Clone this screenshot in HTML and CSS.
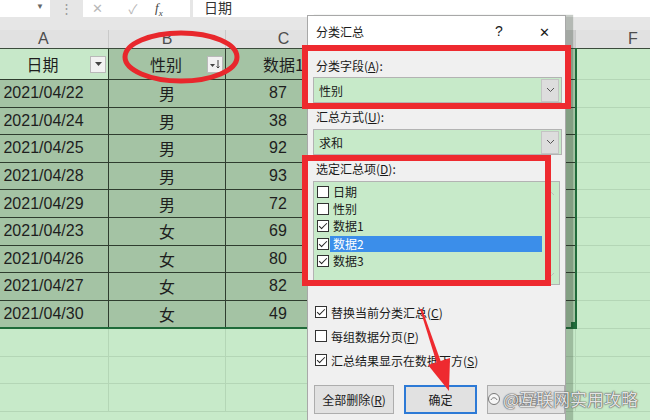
FILE: index.html
```html
<!DOCTYPE html>
<html>
<head>
  <meta charset="utf-8">
  <title>分类汇总</title>
  <link rel="stylesheet" href="styles.css">
</head>
<body>
  <div class="fbar">
    <div class="namebox"><span class="drop">▼</span></div>
    <div class="grip">⋮</div>
    <div class="fbtns">
      <span class="ico">✕</span>
      <span class="ico">✓</span>
      <span class="fx">f<sub>x</sub></span>
    </div>
    <div class="finput">日期</div>
  </div>

  <table class="sheet">
    <colgroup>
      <col class="ca"><col class="cb"><col class="cc"><col class="cd"><col class="ce"><col class="cf">
    </colgroup>
    <tr class="letters"><th>A</th><th>B</th><th>C</th><th>D</th><th class="sel">E</th><th>F</th></tr>
    <tr class="head">
      <td class="a1"><div class="hc"><span class="lbl">日期</span><i class="filter"><svg width="9" height="6" viewBox="0 0 9 6"><path d="M1 1h7L4.5 5z" fill="#444"/></svg></i></div></td>
      <td><div class="hc"><span class="lbl">性别</span><i class="filter"><svg width="12" height="12" viewBox="0 0 12 12"><path d="M1 6h5L3.5 9z" fill="#444"/><path d="M9 2v8M7.5 8.5L9 10l1.5-1.5" stroke="#444" fill="none"/></svg></i></div></td>
      <td>数据1</td><td>数据2</td><td class="edge">数据3</td><td class="free"></td>
    </tr>
    <tr class="row"><td>2021/04/22</td><td>男</td><td class="num">87</td><td></td><td class="edge"></td><td class="free"></td></tr>
    <tr class="row"><td>2021/04/24</td><td>男</td><td class="num">38</td><td></td><td class="edge"></td><td class="free"></td></tr>
    <tr class="row"><td>2021/04/25</td><td>男</td><td class="num">92</td><td></td><td class="edge"></td><td class="free"></td></tr>
    <tr class="row"><td>2021/04/28</td><td>男</td><td class="num">93</td><td></td><td class="edge"></td><td class="free"></td></tr>
    <tr class="row"><td>2021/04/29</td><td>男</td><td class="num">72</td><td></td><td class="edge"></td><td class="free"></td></tr>
    <tr class="row"><td>2021/04/23</td><td>女</td><td class="num">69</td><td></td><td class="edge"></td><td class="free"></td></tr>
    <tr class="row"><td>2021/04/26</td><td>女</td><td class="num">80</td><td></td><td class="edge"></td><td class="free"></td></tr>
    <tr class="row"><td>2021/04/27</td><td>女</td><td class="num">82</td><td></td><td class="edge"></td><td class="free"></td></tr>
    <tr class="row last"><td>2021/04/30</td><td>女</td><td class="num">49</td><td></td><td class="edge"></td><td class="free"></td></tr>
    <tr class="blank"><td></td><td></td><td></td><td></td><td></td><td></td></tr>
    <tr class="blank"><td></td><td></td><td></td><td></td><td></td><td></td></tr>
    <tr class="blank"><td></td><td></td><td></td><td></td><td></td><td></td></tr>
  </table>

  <div class="handle"></div>

  <div class="dialog">
    <div class="dtitle">
      <span>分类汇总</span>
      <span class="tbtn help">?</span>
      <span class="tbtn">✕</span>
    </div>
    <div class="dbody">
      <div class="dlabel">分类字段(<u>A</u>):</div>
      <div class="combo">
        <span>性别</span>
        <i class="cbtn"><svg width="9" height="6" viewBox="0 0 9 6"><path d="M1 1l3.5 3.5L8 1" stroke="#555" fill="none"/></svg></i>
      </div>
      <div class="dlabel">汇总方式(<u>U</u>):</div>
      <div class="combo">
        <span>求和</span>
        <i class="cbtn"><svg width="9" height="6" viewBox="0 0 9 6"><path d="M1 1l3.5 3.5L8 1" stroke="#555" fill="none"/></svg></i>
      </div>
      <div class="dlabel">选定汇总项(<u>D</u>):</div>
      <div class="list">
        <div class="items">
          <div class="item"><b class="chk"></b><span>日期</span></div>
          <div class="item"><b class="chk"></b><span>性别</span></div>
          <div class="item"><b class="chk on"></b><span>数据1</span></div>
          <div class="item sel"><b class="chk on"></b><span>数据2</span></div>
          <div class="item"><b class="chk on"></b><span>数据3</span></div>
        </div>
        <div class="sbar">
          <svg width="7" height="5" viewBox="0 0 7 5"><path d="M1 4l2.5-2.5L6 4" stroke="#bbb" fill="none"/></svg>
          <svg width="7" height="5" viewBox="0 0 7 5"><path d="M1 1l2.5 2.5L6 1" stroke="#bbb" fill="none"/></svg>
        </div>
      </div>
      <div class="opt first"><b class="chk on"></b>替换当前分类汇总(<u>C</u>)</div>
      <div class="opt"><b class="chk"></b>每组数据分页(<u>P</u>)</div>
      <div class="opt"><b class="chk on"></b>汇总结果显示在数据下方(<u>S</u>)</div>
      <div class="btns">
        <button class="b1">全部删除(<u>R</u>)</button>
        <button class="ok">确定</button>
        <button class="b3">取消</button>
      </div>
    </div>
    <div class="mark m1"></div>
    <div class="mark m2"></div>
  </div>

  <svg class="annot" width="650" height="420" viewBox="0 0 650 420">
    <ellipse cx="181" cy="57" rx="56" ry="24" fill="none" stroke="#e8272c" stroke-width="5"/>
    <polygon points="420,309 422,309 441,362 437,364" fill="#ee2a2f"/>
    <polygon points="449,391 428,365 450,358" fill="#ee2a2f"/>
  </svg>

  <div class="watermark">
    <svg width="14" height="14" viewBox="0 0 14 14"><circle cx="7" cy="7" r="5.5" fill="rgba(255,255,255,0.7)" stroke="#777" stroke-width="1"/><path d="M4 8c1-3 5-3 6 0" stroke="#777" fill="none"/></svg>
    <span>@互联网实用攻略</span>
  </div>
</body>
</html>
```

FILE: styles.css
```css
body {
  margin: 0;
  width: 650px;
  height: 420px;
  overflow: hidden;
  position: relative;
  background-color: #c7eac9;
  font-family: "Liberation Sans", "Noto Sans CJK SC", sans-serif;
  color: #1e1e1e;
}

/* formula bar */
.fbar {
  height: 30px;
  background-color: #e6e6e6;
  display: flex;
  align-items: flex-start;
}

.namebox {
  width: 50px;
  height: 17px;
  background-color: #ffffff;
  display: flex;
  justify-content: flex-end;
}

.namebox .drop {
  font-size: 8px;
  color: #666;
  padding: 2px 6px 0 0;
}

.grip {
  width: 33px;
  text-align: center;
  font-size: 13px;
  line-height: 17px;
  color: #9a9a9a;
}

.fbtns {
  width: 107px;
  height: 17px;
  background-color: #ffffff;
  display: flex;
  align-items: center;
}

.fbtns .ico {
  width: 36px;
  text-align: center;
  font-size: 13px;
  color: #b8b8b8;
}

.fbtns .ico:first-child {
  margin-left: -4px;
}

.fbtns .fx {
  margin-left: 4px;
  font-family: "Liberation Serif", serif;
  font-style: italic;
  font-size: 13px;
  color: #444;
}

.fbtns .fx sub {
  font-size: 9px;
}

.finput {
  flex: 1;
  margin-left: 3px;
  height: 17px;
  background-color: #ffffff;
  font-family: "Noto Sans CJK SC", sans-serif;
  font-size: 14px;
  line-height: 15px;
  padding-left: 11px;
  color: #333;
}

/* grid */
.sheet {
  border-collapse: collapse;
  table-layout: fixed;
  width: 712px;
  margin-left: -22px;
  font-size: 16px;
}

.ca { width: 130px; }
.cb { width: 117px; }
.cc { width: 116px; }
.cd { width: 117px; }
.ce { width: 117px; }
.cf { width: 115px; }

.letters th {
  height: 18px;
  padding: 0;
  font-weight: normal;
  font-size: 16px;
  line-height: 18px;
  color: #4d4d4d;
  background-color: #e1e1e1;
  border-right: 1px solid #c9c9c9;
  border-bottom: 1px solid #3c4c3c;
}

.letters th.sel {
  background-color: #cfcfcf;
}

td {
  padding: 0;
  text-align: center;
  white-space: nowrap;
  overflow: hidden;
}

.head td,
.row td {
  background-color: #a4c3a4;
  border: 1px solid #2f3d2f;
  font-family: "Noto Sans CJK SC", sans-serif;
}

.head td {
  height: 30px;
}

.row td {
  height: 26.6px;
  font-family: "Liberation Sans", "Noto Sans CJK SC", sans-serif;
}

.head td.a1 {
  background-color: #c7e8c9;
}

.row td.num {
  padding-right: 11px;
}

td.edge {
  border-right: 2px solid #1f6b3a !important;
}

.row.last td {
  border-bottom: 2px solid #1f6b3a;
}

.head td.free,
.row td.free,
.blank td {
  background-color: #c7eac9;
  border: 1px solid #b4d6b6;
}

.blank td {
  height: 26.5px;
}

.hc {
  display: flex;
  align-items: center;
  padding-left: 16px;
}

.hc .lbl {
  flex: 1;
  text-align: center;
}

.filter {
  width: 14px;
  height: 15px;
  margin-right: 2px;
  background-color: #f2f2f2;
  border: 1px solid #b9b9b9;
  display: flex;
  align-items: center;
  justify-content: center;
}

.handle {
  position: absolute;
  left: 571px;
  top: 322px;
  width: 5px;
  height: 5px;
  background-color: #1f6b3a;
}

/* dialog */
.dialog {
  position: absolute;
  left: 307px;
  top: 15px;
  width: 259px;
  height: 420px;
  background-color: #f0f0f0;
  border: 1px solid #a8a8a8;
  box-sizing: border-box;
  box-shadow: 7px 0 1px rgba(30, 50, 30, 0.25);
  font-family: "Noto Sans CJK SC", sans-serif;
  font-size: 12px;
  color: #1a1a1a;
}

.dtitle {
  height: 30px;
  background-color: #ffffff;
  display: flex;
  align-items: center;
  padding-left: 8px;
  padding-right: 6px;
}

.dtitle .tbtn {
  width: 30px;
  text-align: center;
  font-size: 13px;
}

.dtitle .help {
  margin-left: auto;
  margin-right: 15px;
  font-family: "Liberation Sans", sans-serif;
  font-size: 14px;
}

.dbody {
  padding: 12px 0 0 5px;
}

.dlabel {
  height: 16px;
  line-height: 16px;
  padding-left: 3px;
  margin-top: 6px;
}

.dlabel:first-child {
  margin-top: 0;
}

.combo {
  margin-top: 3px;
  width: 249px;
  height: 26px;
  box-sizing: border-box;
  background-color: #c7eac9;
  border: 1px solid #b3b3b3;
  display: flex;
  align-items: center;
  padding-left: 5px;
}

.combo + .dlabel + .combo {
  margin-top: 4px;
}

.cbtn {
  margin-left: auto;
  margin-right: 2px;
  width: 16px;
  height: 21px;
  background-color: #dddddd;
  border: 1px solid #c4c4c4;
  display: flex;
  align-items: center;
  justify-content: center;
}

.list {
  margin-top: 4px;
  width: 247px;
  height: 104px;
  box-sizing: border-box;
  background-color: #c7eac9;
  border: 1px solid #b3b3b3;
  display: flex;
}

.items {
  flex: 1;
  padding-top: 1px;
}

.item {
  height: 17.3px;
  display: flex;
  align-items: center;
  padding-left: 3px;
}

.item span {
  flex: 1;
  margin-left: 1px;
  padding-left: 3px;
  line-height: 16px;
}

.item.sel span {
  background-color: #3b8eea;
  color: #ffffff;
  margin-right: 1px;
}

.sbar {
  width: 16px;
  display: flex;
  flex-direction: column;
  justify-content: space-between;
  align-items: center;
  padding: 9px 0 7px;
}

.chk {
  width: 12px;
  height: 12px;
  box-sizing: border-box;
  border: 1px solid #333;
  background-color: #ffffff;
  position: relative;
  flex: none;
}

.chk.on::after {
  content: "";
  position: absolute;
  left: 3px;
  top: 0;
  width: 3px;
  height: 7px;
  border: solid #222;
  border-width: 0 1.5px 1.5px 0;
  transform: rotate(45deg);
}

.opt {
  height: 24px;
  display: flex;
  align-items: center;
  padding-left: 2px;
}

.opt .chk {
  margin-right: 4px;
}

.opt.first {
  margin-top: 15px;
}

.btns {
  margin-top: 13px;
  display: flex;
}

.btns button {
  height: 29px;
  font-family: "Noto Sans CJK SC", sans-serif;
  font-size: 12px;
  color: #1a1a1a;
  background-color: #e1e1e1;
  border: 1px solid #adadad;
  padding: 0;
}

.btns .b1 {
  width: 80px;
  margin-left: 1px;
}

.btns .ok {
  width: 73px;
  margin-left: 10px;
  border: 2px solid #2d7ad6;
}

.btns .b3 {
  width: 78px;
  margin-left: 10px;
  color: #8a8a8a;
}

.mark {
  position: absolute;
  border: 6px solid #ee2a2f;
  box-sizing: border-box;
}

.m1 {
  left: -6px;
  top: 29px;
  width: 269px;
  height: 64px;
}

.m2 {
  left: -6px;
  top: 139px;
  width: 249px;
  height: 131px;
}

/* annotations */
.annot {
  position: absolute;
  left: 0;
  top: 0;
}

.watermark {
  position: absolute;
  left: 487px;
  top: 386px;
  display: flex;
  align-items: center;
  gap: 2px;
  font-family: "Noto Sans CJK SC", sans-serif;
  font-size: 17px;
  color: rgba(255, 255, 255, 0.85);
  text-shadow: 0 0 1px #555, 0 0 1px #555, 0 0 2px #777;
}
```
